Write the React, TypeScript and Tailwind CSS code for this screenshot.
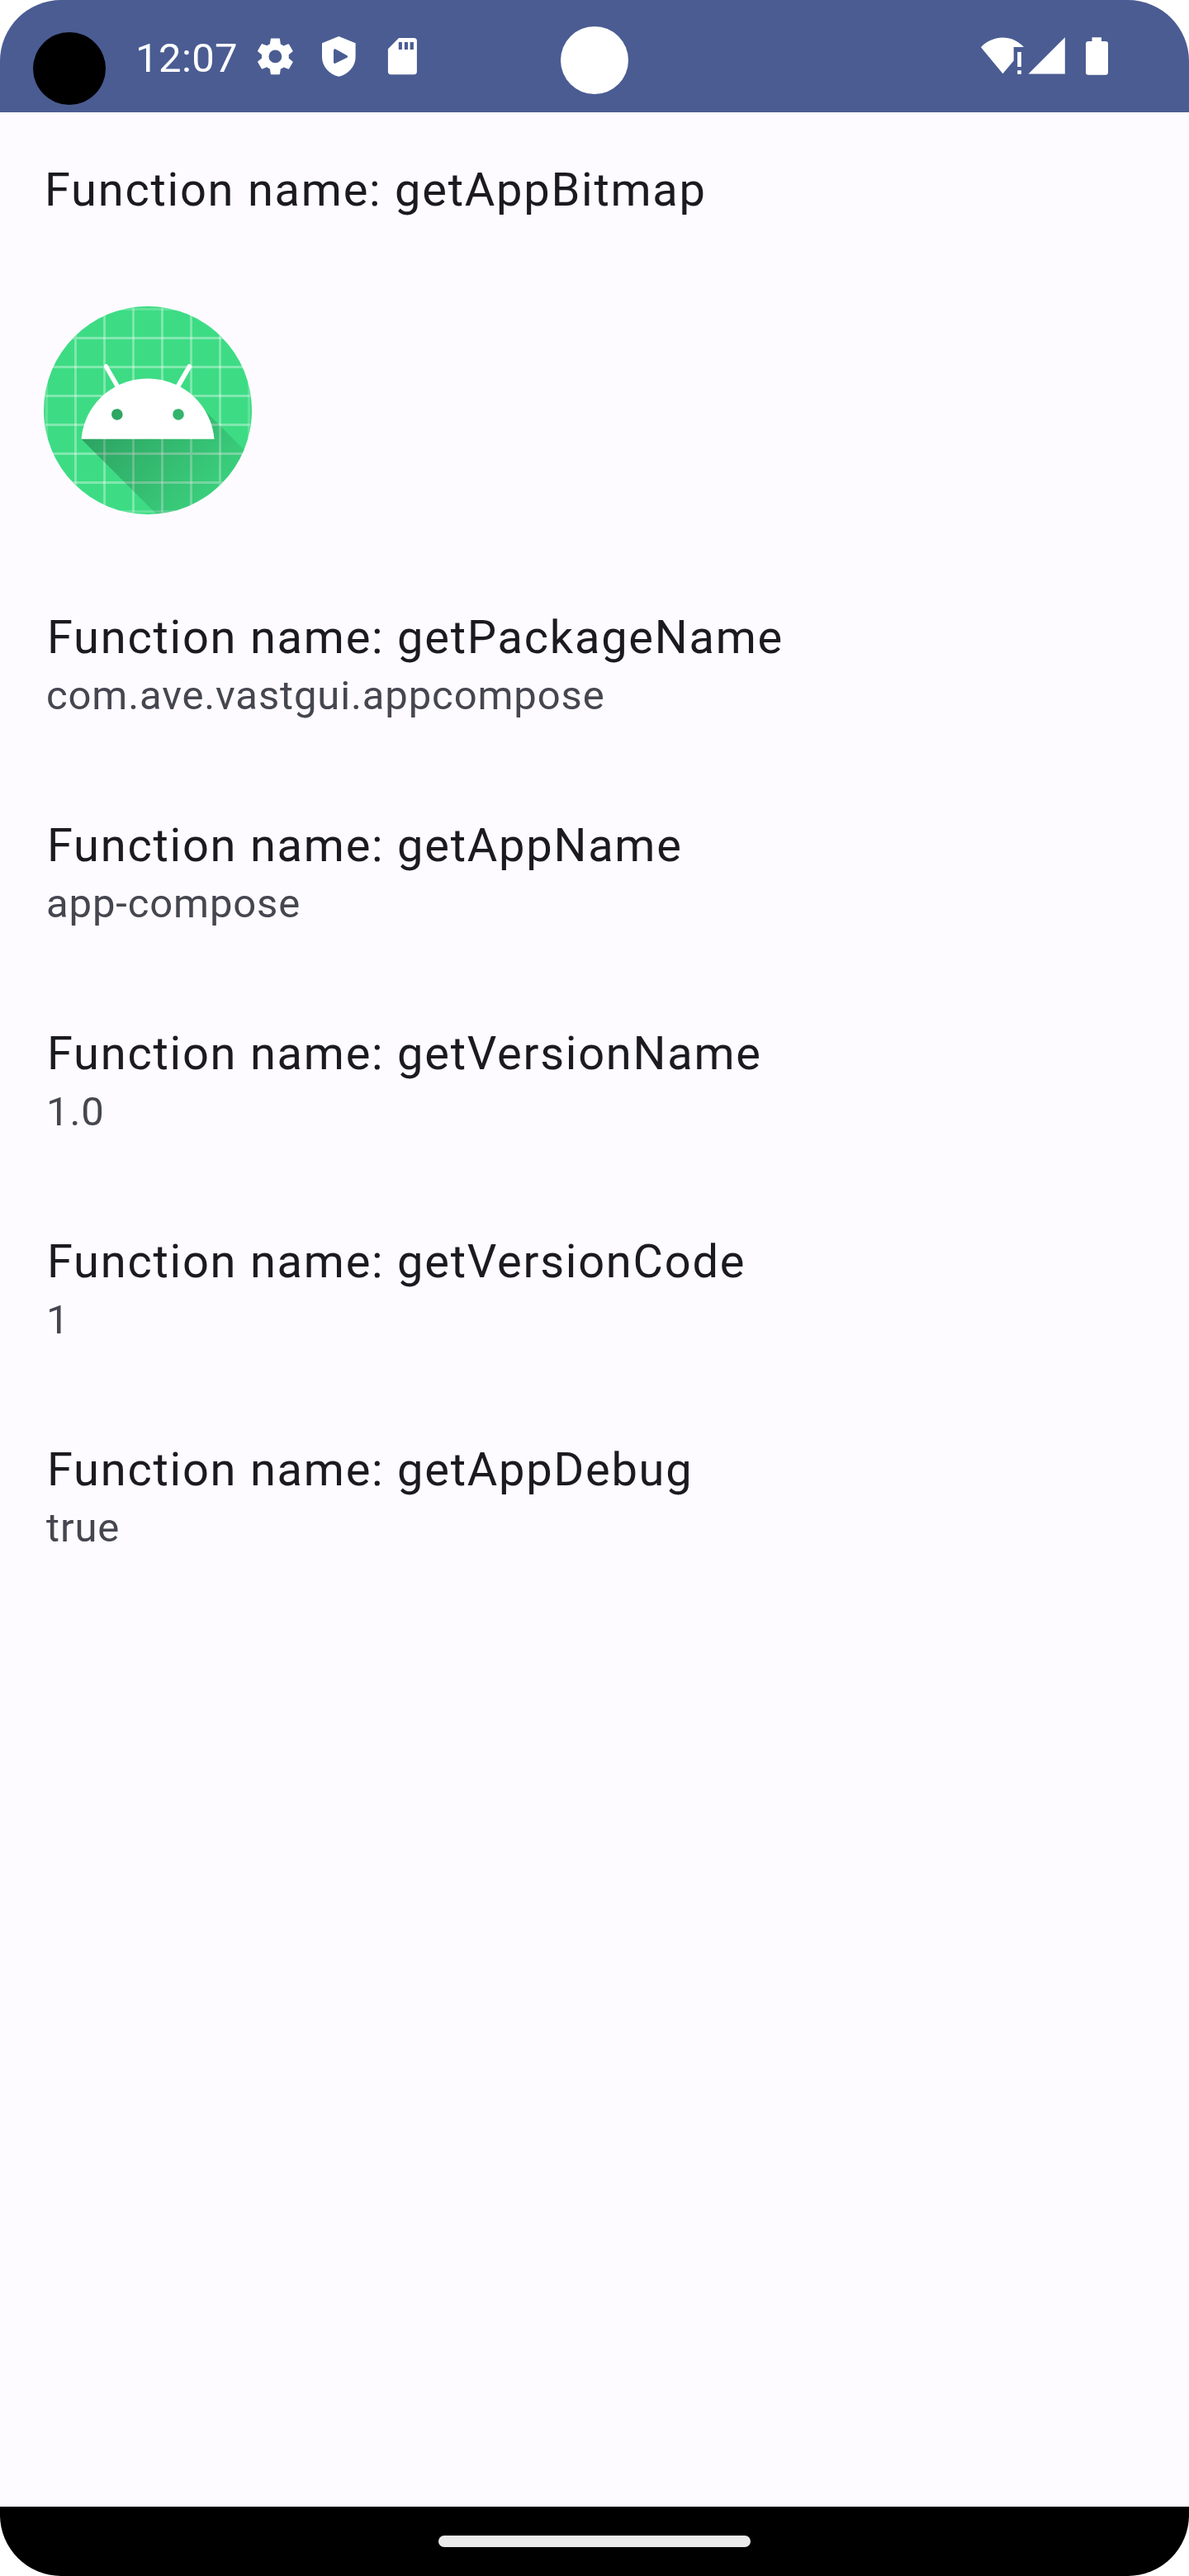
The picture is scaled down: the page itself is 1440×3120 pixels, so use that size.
const items = [
  ['getPackageName', 'com.ave.vastgui.appcompose'],
  ['getAppName', 'app-compose'],
  ['getVersionName', '1.0'],
  ['getVersionCode', '1'],
  ['getAppDebug', 'true'],
];

const gridLines = [19, 29, 39, 49, 59, 69, 79, 89];
const innerLines = [29, 39, 49, 59, 69, 79];

function LauncherIcon() {
  return (
    <svg className="block size-[252px]" viewBox="18 18 72 72">
      <defs>
        <clipPath id="mask">
          <circle cx="54" cy="54" r="36" />
        </clipPath>
        <linearGradient id="shade" gradientUnits="userSpaceOnUse" x1="42.9492" y1="49.59793" x2="85.84757" y2="92.4963">
          <stop offset="0" stopColor="#000" stopOpacity="0.267" />
          <stop offset="1" stopColor="#000" stopOpacity="0" />
        </linearGradient>
      </defs>
      <g clipPath="url(#mask)">
        <rect width="108" height="108" fill="#3DDC84" />
        <g stroke="#fff" strokeOpacity="0.2" strokeWidth="0.8">
          {gridLines.map((n) => (
            <path key={n} d={`M${n},0V108M0,${n}H108`} />
          ))}
          {innerLines.map((n) => (
            <path key={n} d={`M${n},19V89M19,${n}H89`} />
          ))}
        </g>
        <path
          fill="url(#shade)"
          d="M31,63.928c0,0 6.4,-11 12.1,-13.1c7.2,-2.6 26,-1.4 26,-1.4l38.1,38.1L107,108.928l-32,-1L31,63.928z"
        />
        <path
          fill="#fff"
          d="M65.3,45.828l3.8,-6.6c0.2,-0.4 0.1,-0.9 -0.3,-1.1c-0.4,-0.2 -0.9,-0.1 -1.1,0.3l-3.9,6.7c-6.3,-2.8 -13.4,-2.8 -19.7,0l-3.9,-6.7c-0.2,-0.4 -0.7,-0.5 -1.1,-0.3C38.8,38.328 38.7,38.828 38.9,39.228l3.8,6.6C36.2,49.428 31.7,56.028 31,63.928h46C76.3,56.028 71.8,49.428 65.3,45.828zM43.4,57.328c-0.8,0 -1.5,-0.5 -1.8,-1.2c-0.3,-0.7 -0.1,-1.5 0.4,-2.1c0.5,-0.5 1.4,-0.7 2.1,-0.4c0.7,0.3 1.2,1 1.2,1.8C45.3,56.528 44.5,57.328 43.4,57.328L43.4,57.328zM64.6,57.328c-0.8,0 -1.5,-0.5 -1.8,-1.2s-0.1,-1.5 0.4,-2.1c0.5,-0.5 1.4,-0.7 2.1,-0.4c0.7,0.3 1.2,1 1.2,1.8C66.5,56.528 65.6,57.328 64.6,57.328L64.6,57.328z"
        />
      </g>
    </svg>
  );
}

function NotificationIcons() {
  return (
    <svg className="block h-[52px] w-[204px] fill-white" viewBox="306 42 204 52">
      {/* settings gear */}
      <path
        fillRule="evenodd"
        transform="translate(307.1 42.1) scale(2.19)"
        d="M19.43 12.98c.04-.32.07-.64.07-.98s-.03-.66-.07-.98l2.15-1.68q.25-.25.1-.5l-2.05-3.56q-.2-.25-.5-.15l-2.49 1c-.52-.4-1.08-.73-1.69-.98L14.55 2.3q-.05-.3-.4-.3h-4.3q-.35 0-.4.3L9.050 5.070c-.61.25-1.17.59-1.69.98l-2.490-1q-.3-.1-.5.15L2.320 8.760q-.15.3.1.5l2.150 1.760c-.04.32-.07.65-.07.98s.03.66.07.98l-2.150 1.680q-.25.250-.1.500l2.050 3.560q.2.250.5.150l2.490-1c.52.4 1.08.73 1.690.98l.4 2.850q.05.300.4.300h4.300q.35 0 .4-.300l.4-2.770c.61-.25 1.17-.59 1.690-.98l2.490 1q.3.100.5-.150l2.050-3.560q.15-.300-.1-.500zM12 15.600A3.600 3.600 0 1 1 12 8.400a3.600 3.600 0 0 1 0 7.200z"
      />
      {/* protection shield */}
      <path
        fillRule="evenodd"
        d="M410.3 44l20.3 8.2v17.3c0 10.3-8.5 20.5-20.3 23.3-11.8-2.8-20.3-13-20.3-23.3V52.2zM404 61v14.6q.4 2 2 1.2l14.4-7q1.8-1.3 0-2.6L406 59.3q-1.600-.5-2 1.700z"
      />
      {/* memory card */}
      <path
        fillRule="evenodd"
        d="M483 46h18.400q3.500.300 3.500 3.500V87q-.3 3.300-3.500 3.300H473q-2.900-.3-3.100-3.300V59.300zM482.800 51v9h4.100v-9zM489.900 51v9h4.100v-9zM496.600 51v9h4.300v-9z"
      />
    </svg>
  );
}

function SystemIcons() {
  return (
    <svg className="block h-[48px] w-[156px] fill-white" viewBox="1187 44 156 48">
      {/* wifi with warning mark */}
      <path d="M1188 57.2C1203 41.800 1225.500 41.800 1240 57H1227.700V73.500L1214.500 89.300z" />
      <path d="M1232.200 63h4.700v18h-4.700zM1232.200 85.200h4.700v4.500h-4.700z" />
      {/* cellular signal */}
      <path d="M1289.800 45.300V89.600H1245.500z" />
      {/* battery */}
      <path d="M1322.500 45.300h11.500V50h5q3 .2 3 3V88q-.2 2.700-3 2.700h-21q-2.800 0-3-2.700V53q.2-2.800 3-3h4.500z" />
    </svg>
  );
}

export default function App() {
  return (
    <div className="h-[3120px] w-[1440px] bg-white">
      <div className="flex h-full flex-col overflow-hidden rounded-[74px] bg-[#fdfbff] font-['Roboto',sans-serif]">
        <header className="relative flex h-[136px] shrink-0 items-start bg-[#4a5c92] text-white">
          <div className="mt-[39px] ml-10 size-[88px] rounded-full bg-black" />
          <span className="mt-9 ml-9 w-[142px] text-[49px] leading-[70px] tracking-[0.4px]">12:07</span>
          <div className="mt-[42px]">
            <NotificationIcons />
          </div>
          <div className="mt-[44px] mr-[97px] ml-auto">
            <SystemIcons />
          </div>
          <div className="absolute top-8 left-[679px] size-[82px] rounded-full bg-white" />
        </header>

        <main className="flex-1 pt-[52px]">
          <h1 className="pl-[54px] text-[56px] leading-[84px] tracking-[1.75px] text-[#1b1b1f]">
            Function name: getAppBitmap
          </h1>
          <div className="mt-[99px] ml-[53px]">
            <LauncherIcon />
          </div>
          <ul className="mt-[114px] flex flex-col gap-[110px] pl-14">
            {items.map(([name, value]) => (
              <li key={name}>
                <p className="pl-px text-[56px] leading-[70px] tracking-[1.75px] text-[#1b1b1f]">
                  Function name: {name}
                </p>
                <p className="text-[49px] leading-[72px] tracking-[0.875px] text-[#45464f]">{value}</p>
              </li>
            ))}
          </ul>
        </main>

        <footer className="flex h-[84px] shrink-0 justify-center bg-black pt-[35px]">
          <div className="h-3.5 w-[378px] rounded-full bg-[#ebebeb]" />
        </footer>
      </div>
    </div>
  );
}
